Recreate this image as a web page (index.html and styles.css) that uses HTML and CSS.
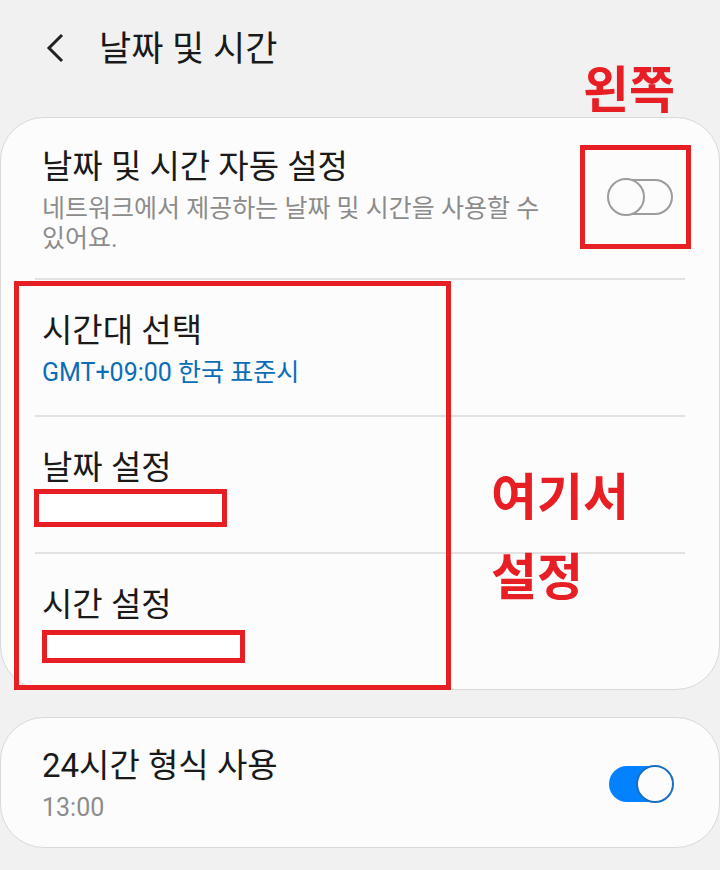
FILE: index.html
```html
<!DOCTYPE html>
<html lang="ko">
<head>
    <meta charset="UTF-8">
    <meta name="viewport" content="width=device-width, initial-scale=1.0">
    <title>날짜 및 시간</title>
    <link rel="stylesheet" href="styles.css">
</head>
<body>
    <header class="header">
        <button type="button" class="back" aria-label="뒤로">
            <svg width="18" height="30" viewBox="0 0 18 30" fill="none" stroke="#222" stroke-width="3">
                <path d="M16 2 L3 15 L16 28"/>
            </svg>
        </button>
        <h1>날짜 및 시간</h1>
    </header>

    <main>
        <section class="card">
            <div class="row row-auto">
                <label class="text" for="auto">
                    <span class="title">날짜 및 시간 자동 설정</span>
                    <span class="sub">네트워크에서 제공하는 날짜 및 시간을 사용할 수 있어요.</span>
                </label>
                <div class="switch-box">
                    <input type="checkbox" class="switch" id="auto">
                    <div class="frame frame-switch"></div>
                </div>
            </div>

            <div class="manual">
                <button type="button" class="row">
                    <span class="text">
                        <span class="title">시간대 선택</span>
                        <span class="sub link">GMT+09:00 한국 표준시</span>
                    </span>
                </button>
                <button type="button" class="row">
                    <span class="text">
                        <span class="title">날짜 설정</span>
                        <span class="mask mask-date"></span>
                    </span>
                </button>
                <button type="button" class="row">
                    <span class="text">
                        <span class="title">시간 설정</span>
                        <span class="mask mask-time"></span>
                    </span>
                </button>
                <div class="frame frame-manual"></div>
                <p class="note note-manual">여기서<br>설정</p>
            </div>
            <p class="note note-switch">왼쪽</p>
        </section>

        <section class="card">
            <div class="row row-format">
                <label class="text" for="format24">
                    <span class="title">24시간 형식 사용</span>
                    <span class="sub">13:00</span>
                </label>
                <div class="switch-box">
                    <input type="checkbox" class="switch" id="format24" checked>
                </div>
            </div>
        </section>
    </main>
</body>
</html>
```
FILE: styles.css
```css
* {
    box-sizing: border-box;
}

body {
    margin: 0;
    background-color: #f1f1f1;
    color: #1a1a1a;
    font-family: Roboto, "Noto Sans CJK KR", sans-serif;
}

.header {
    display: flex;
    align-items: center;
    gap: 35px;
    height: 117px;
    padding: 0 46px 22px;
}

.back {
    display: flex;
    padding: 0;
    border: none;
    background: none;
    cursor: pointer;
}

h1 {
    margin: 4px 0 0;
    font-size: 35px;
    font-weight: normal;
    line-height: 44px;
}

.card {
    position: relative;
    margin-bottom: 27px;
    padding: 0 34px;
    background-color: #fcfcfc;
    border: 1px solid #d9d9d9;
    border-radius: 44px;
}

.row {
    display: flex;
    justify-content: space-between;
    align-items: flex-start;
    width: 100%;
    height: 137px;
    padding: 29px 7px 0;
    border: none;
    border-bottom: 2px solid #e2e2e2;
    background: none;
    color: inherit;
    font-family: inherit;
    text-align: left;
}

button.row {
    cursor: pointer;
}

.row-auto {
    height: auto;
    padding: 27px 7px 24px;
}

.row-auto .switch-box {
    margin-top: 34px;
}

.row-format {
    align-items: center;
    height: auto;
    padding: 26px 7px 24px;
    border-bottom: none;
}

.manual {
    position: relative;
}

.manual .row:nth-child(3) {
    border-bottom: none;
    height: 135px;
}

.text {
    display: block;
    position: relative;
    max-width: 500px;
}

.title {
    display: block;
    font-size: 33px;
    line-height: 44px;
}

.sub {
    display: block;
    margin-top: 5px;
    color: #8c8c8c;
    font-size: 25px;
    line-height: 30px;
}

.link {
    color: #0b6cb8;
}

/* Переключатель */
.switch-box {
    position: relative;
    display: flex;
    margin-right: 5px;
}

.switch {
    appearance: none;
    position: relative;
    width: 64px;
    height: 36px;
    margin: 0;
    border: 2px solid #9c9c9c;
    border-radius: 18px;
    cursor: pointer;
}

.switch::before {
    content: "";
    position: absolute;
    top: -3px;
    left: -4px;
    width: 38px;
    height: 38px;
    box-sizing: border-box;
    background-color: #fcfcfc;
    border: 2px solid #9c9c9c;
    border-radius: 50%;
}

.switch:checked {
    background-color: #0381fe;
    border-color: #0381fe;
}

.switch:checked::before {
    left: 25px;
    border-color: #1a6fc0;
}

/* Красные пометки */
.frame,
.mask {
    position: absolute;
    border: 5px solid #e81e25;
    pointer-events: none;
}

.frame-switch {
    top: -34px;
    right: -18px;
    width: 111px;
    height: 104px;
}

.frame-manual {
    top: 1px;
    left: -21px;
    width: 437px;
    height: 409px;
}

.mask {
    background-color: #fff;
}

.mask-date {
    top: 43px;
    left: -8px;
    width: 193px;
    height: 38px;
}

.mask-time {
    top: 47px;
    left: 0;
    width: 203px;
    height: 33px;
}

.note {
    position: absolute;
    margin: 0;
    color: #e81e25;
    font-size: 50px;
    font-weight: bold;
    line-height: 80px;
    white-space: nowrap;
}

.note-switch {
    top: -67px;
    right: 44px;
}

.note-manual {
    top: 178px;
    left: 456px;
}
```
